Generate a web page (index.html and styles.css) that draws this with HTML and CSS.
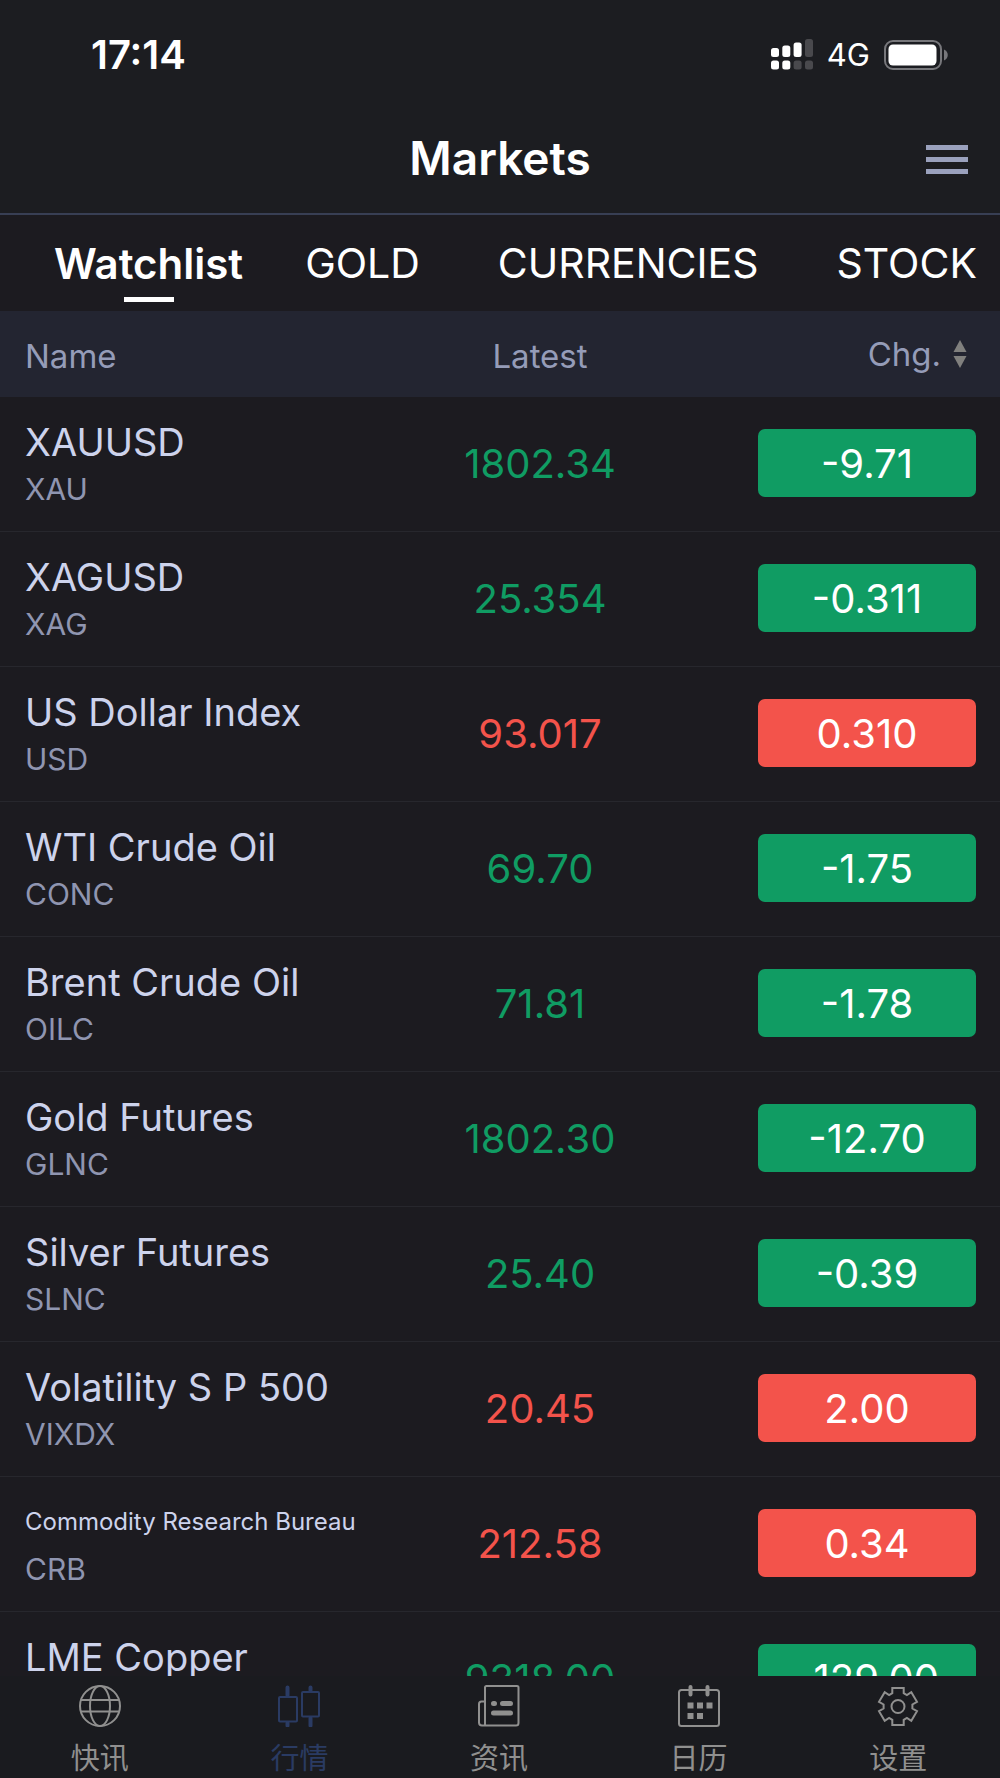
FILE: index.html
```html
<!DOCTYPE html>
<html lang="en">
<head>
    <meta charset="UTF-8">
    <meta name="viewport" content="width=device-width, initial-scale=1.0">
    <title>Markets</title>
    <link rel="stylesheet" href="styles.css">
</head>
<body>
    <div class="status-bar">
        <span class="time">17:14</span>
        <div class="status-icons">
            <svg class="signal" width="42" height="31" viewBox="0 0 42 31">
                <g fill="#fff">
                    <rect x="0" y="9" width="8" height="9" rx="2.5"/>
                    <rect x="11.3" y="6.500" width="8" height="11.500" rx="2.5"/>
                    <rect x="22.600" y="3.500" width="8" height="14.500" rx="2.5"/>
                    <rect x="0" y="21.500" width="8" height="9" rx="2.5"/>
                    <rect x="11.3" y="21.500" width="8" height="9" rx="2.5"/>
                </g>
                <g fill="#49494d">
                    <rect x="34" y="0" width="8" height="18" rx="2.5"/>
                    <rect x="22.600" y="21.500" width="8" height="9" rx="2.5"/>
                    <rect x="34" y="21.500" width="8" height="9" rx="2.5"/>
                </g>
            </svg>
            <span class="network">4G</span>
            <svg class="battery" width="64" height="30" viewBox="0 0 64 30">
                <rect x="1" y="1" width="56" height="28" rx="8" fill="none" stroke="#77777b" stroke-width="2"/>
                <rect x="4.500" y="4.500" width="48" height="21" rx="4.500" fill="#fff"/>
                <path d="M60 9.500c5 2 5 9 0 11z" fill="#77777b"/>
            </svg>
        </div>
    </div>

    <header class="header">
        <h1>Markets</h1>
        <button class="menu-btn" aria-label="Menu">
            <span></span>
            <span></span>
            <span></span>
        </button>
    </header>

    <nav class="tabs">
        <button class="tab active">Watchlist</button>
        <button class="tab">GOLD</button>
        <button class="tab">CURRENCIES</button>
        <button class="tab">STOCK</button>
    </nav>

    <main class="quotes">
        <table>
            <thead>
                <tr>
                    <th class="name">Name</th>
                    <th class="latest">Latest</th>
                    <th class="change">
                        <button class="sort-btn">
                            Chg.
                            <svg width="14" height="28" viewBox="0 0 14 28" fill="#80807e">
                                <path d="M7 0l6.500 12h-13z"/>
                                <path d="M7 28l6.500-12h-13z"/>
                            </svg>
                        </button>
                    </th>
                </tr>
            </thead>
            <tbody>
                <tr class="down">
                    <td class="name"><div class="title">XAUUSD</div><div class="symbol">XAU</div></td>
                    <td class="latest">1802.34</td>
                    <td class="change"><span class="badge">-9.71</span></td>
                </tr>
                <tr class="down">
                    <td class="name"><div class="title">XAGUSD</div><div class="symbol">XAG</div></td>
                    <td class="latest">25.354</td>
                    <td class="change"><span class="badge">-0.311</span></td>
                </tr>
                <tr class="up">
                    <td class="name"><div class="title">US Dollar Index</div><div class="symbol">USD</div></td>
                    <td class="latest">93.017</td>
                    <td class="change"><span class="badge">0.310</span></td>
                </tr>
                <tr class="down">
                    <td class="name"><div class="title">WTI Crude Oil</div><div class="symbol">CONC</div></td>
                    <td class="latest">69.70</td>
                    <td class="change"><span class="badge">-1.75</span></td>
                </tr>
                <tr class="down">
                    <td class="name"><div class="title">Brent Crude Oil</div><div class="symbol">OILC</div></td>
                    <td class="latest">71.81</td>
                    <td class="change"><span class="badge">-1.78</span></td>
                </tr>
                <tr class="down">
                    <td class="name"><div class="title">Gold Futures</div><div class="symbol">GLNC</div></td>
                    <td class="latest">1802.30</td>
                    <td class="change"><span class="badge">-12.70</span></td>
                </tr>
                <tr class="down">
                    <td class="name"><div class="title">Silver Futures</div><div class="symbol">SLNC</div></td>
                    <td class="latest">25.40</td>
                    <td class="change"><span class="badge">-0.39</span></td>
                </tr>
                <tr class="up">
                    <td class="name"><div class="title">Volatility S P 500</div><div class="symbol">VIXDX</div></td>
                    <td class="latest">20.45</td>
                    <td class="change"><span class="badge">2.00</span></td>
                </tr>
                <tr class="up">
                    <td class="name"><div class="title long">Commodity Research Bureau</div><div class="symbol">CRB</div></td>
                    <td class="latest">212.58</td>
                    <td class="change"><span class="badge">0.34</span></td>
                </tr>
                <tr class="down">
                    <td class="name"><div class="title">LME Copper</div></td>
                    <td class="latest">9318.00</td>
                    <td class="change"><span class="badge">-129.00</span></td>
                </tr>
            </tbody>
        </table>
    </main>

    <nav class="bottom-nav" lang="zh-CN">
        <a href="#news">
            <svg viewBox="0 0 42 42">
                <circle cx="21" cy="21" r="20"/>
                <ellipse cx="21" cy="21" rx="10" ry="20"/>
                <path d="M2 15h38M2 26.500h38"/>
            </svg>
            快讯
        </a>
        <a href="#markets" class="active">
            <svg viewBox="0 0 42 42">
                <rect x="1" y="12" width="18" height="24.500" rx="1"/>
                <rect x="24" y="7" width="17" height="24.500" rx="1"/>
                <path class="wick" d="M9.500 2.500v8M9.500 38v2.500M32.500 2.500v3M32.500 33v7.500"/>
            </svg>
            行情
        </a>
        <a href="#articles">
            <svg viewBox="0 0 42 42">
                <path d="M7 40.500V2.500q0-1.500 1.500-1.500h30.500q1.500 0 1.500 1.500v35.500q0 2.500-2.500 2.500H4q-3 0-3-3V19q0-2.500 2.500-2.500H7"/>
                <path class="thick" d="M15.500 18.500h1M24.500 18.500h8M15.500 28h17"/>
            </svg>
            资讯
        </a>
        <a href="#calendar">
            <svg viewBox="0 0 42 42">
                <rect x="1" y="5" width="40" height="36" rx="2.500"/>
                <path class="wick" d="M12.500 2v7.500M29.500 2v7.500"/>
                <path class="fill" d="M9.500 17.500h6v6h-6zM19 17.500h6v6h-6zM28.500 17.500h6v6h-6zM9.500 28h6v6h-6zM19 28h6v6h-6z"/>
            </svg>
            日历
        </a>
        <a href="#settings">
            <svg viewBox="0 0 42 42">
                <path d="M15.300 2.900h11.400v5.200l3.200 1.900 4.400-2.800 5.700 9.600-4.600 2.700v4l4.600 2.700-5.700 9.600-4.400-2.800-3.200 1.900v5.200H15.300v-5.200l-3.200-1.900-4.400 2.800-5.700-9.600 4.600-2.700v-4L2 16.800l5.700-9.600 4.400 2.800 3.200-1.900z"/>
                <circle cx="21" cy="21.500" r="6.500"/>
            </svg>
            设置
        </a>
    </nav>
</body>
</html>
```
FILE: styles.css
```css
* {
    box-sizing: border-box;
}

body {
    margin: 0;
    height: 100vh;
    display: flex;
    flex-direction: column;
    background: #1c1b20;
    color: #fff;
    font-family: Inter, "Noto Sans CJK SC", sans-serif;
    overflow: hidden;
}

button {
    padding: 0;
    border: none;
    background: none;
    color: inherit;
    font: inherit;
    cursor: pointer;
}

.status-bar {
    display: flex;
    justify-content: space-between;
    align-items: center;
    height: 109px;
    padding: 0 52px 0 91px;
    background: #1c1d21;
}

.time {
    font-size: 40px;
    font-weight: 600;
}

.status-icons {
    display: flex;
    align-items: center;
    gap: 14px;
}

.network {
    font-size: 31px;
}

.header {
    display: grid;
    grid-template-columns: 1fr auto 1fr;
    align-items: center;
    height: 106px;
    padding: 0 32px 3px;
    background: #1c1d21;
    border-bottom: 2px solid #383f54;
}

.header h1 {
    grid-column: 2;
    margin: 0;
    padding-bottom: 4px;
    font-size: 46px;
    font-weight: 600;
    line-height: 56px;
}

.menu-btn {
    display: flex;
    flex-direction: column;
    gap: 7px;
    width: 42px;
    justify-self: end;
}

.menu-btn span {
    height: 5px;
    background: #9aa1bd;
}

.tabs {
    display: flex;
    height: 96px;
    padding: 0 31px;
    overflow: hidden;
}

.tab {
    position: relative;
    flex: none;
    padding: 0 39px;
    font-size: 41px;
}

.tab.active {
    padding: 0 23px;
    font-size: 42px;
    font-weight: 600;
}

.tab.active::after {
    content: "";
    position: absolute;
    left: 50%;
    bottom: 9px;
    width: 50px;
    height: 5px;
    margin-left: -25px;
    background: #fff;
}

.quotes {
    flex: 1;
    min-height: 0;
    overflow: hidden;
}

table {
    width: 100%;
    table-layout: fixed;
    border-collapse: separate;
    border-spacing: 0;
}

th {
    height: 86px;
    padding: 4px 0 0;
    background: #232531;
    color: #959cb8;
    font-size: 33px;
    font-weight: 400;
}

td {
    height: 135px;
    padding: 0 0 2px;
    border-bottom: 1px solid #27272d;
}

.name {
    width: 36%;
    padding-left: 25px;
    text-align: left;
    white-space: nowrap;
}

.latest {
    width: 36%;
    text-align: center;
}

.change {
    width: 28%;
    padding-right: 24px;
    text-align: right;
}

th.change {
    padding-top: 0;
}

.sort-btn {
    display: inline-flex;
    align-items: center;
    gap: 12px;
    margin-right: 9px;
}

td.name {
    padding-top: 20px;
    vertical-align: top;
}

.title {
    color: #cdd3ec;
    font-size: 38px;
    line-height: 50px;
}

.title.long {
    font-size: 24px;
}

.symbol {
    color: #8f95b0;
    font-size: 30px;
    line-height: 44px;
}

td.latest {
    font-size: 40px;
}

.down .latest {
    color: #109c63;
}

.up .latest {
    color: #f3534b;
}

.badge {
    display: inline-block;
    height: 68px;
    width: 218px;
    border-radius: 7px;
    font-size: 40px;
    line-height: 70px;
    text-align: center;
    vertical-align: middle;
}

.down .badge {
    background: #109c63;
}

.up .badge {
    background: #f3534b;
}

.bottom-nav {
    display: grid;
    grid-template-columns: repeat(5, 1fr);
    height: 102px;
    padding-right: 2px;
    background: #1a1b1f;
}

.bottom-nav a {
    display: flex;
    flex-direction: column;
    align-items: center;
    gap: 9px;
    padding-top: 9px;
    color: #90908f;
    font-family: "Noto Sans CJK SC", sans-serif;
    font-size: 29px;
    line-height: 40px;
    text-decoration: none;
}

.bottom-nav a.active {
    color: #2a3b63;
}

.bottom-nav svg {
    width: 42px;
    height: 42px;
    fill: none;
    stroke: currentColor;
    stroke-width: 2;
}

.bottom-nav .wick {
    stroke-width: 4;
    stroke-linecap: round;
}

.bottom-nav .thick {
    stroke-width: 5;
    stroke-linecap: round;
}

.bottom-nav .fill {
    fill: currentColor;
    stroke: none;
}
```
